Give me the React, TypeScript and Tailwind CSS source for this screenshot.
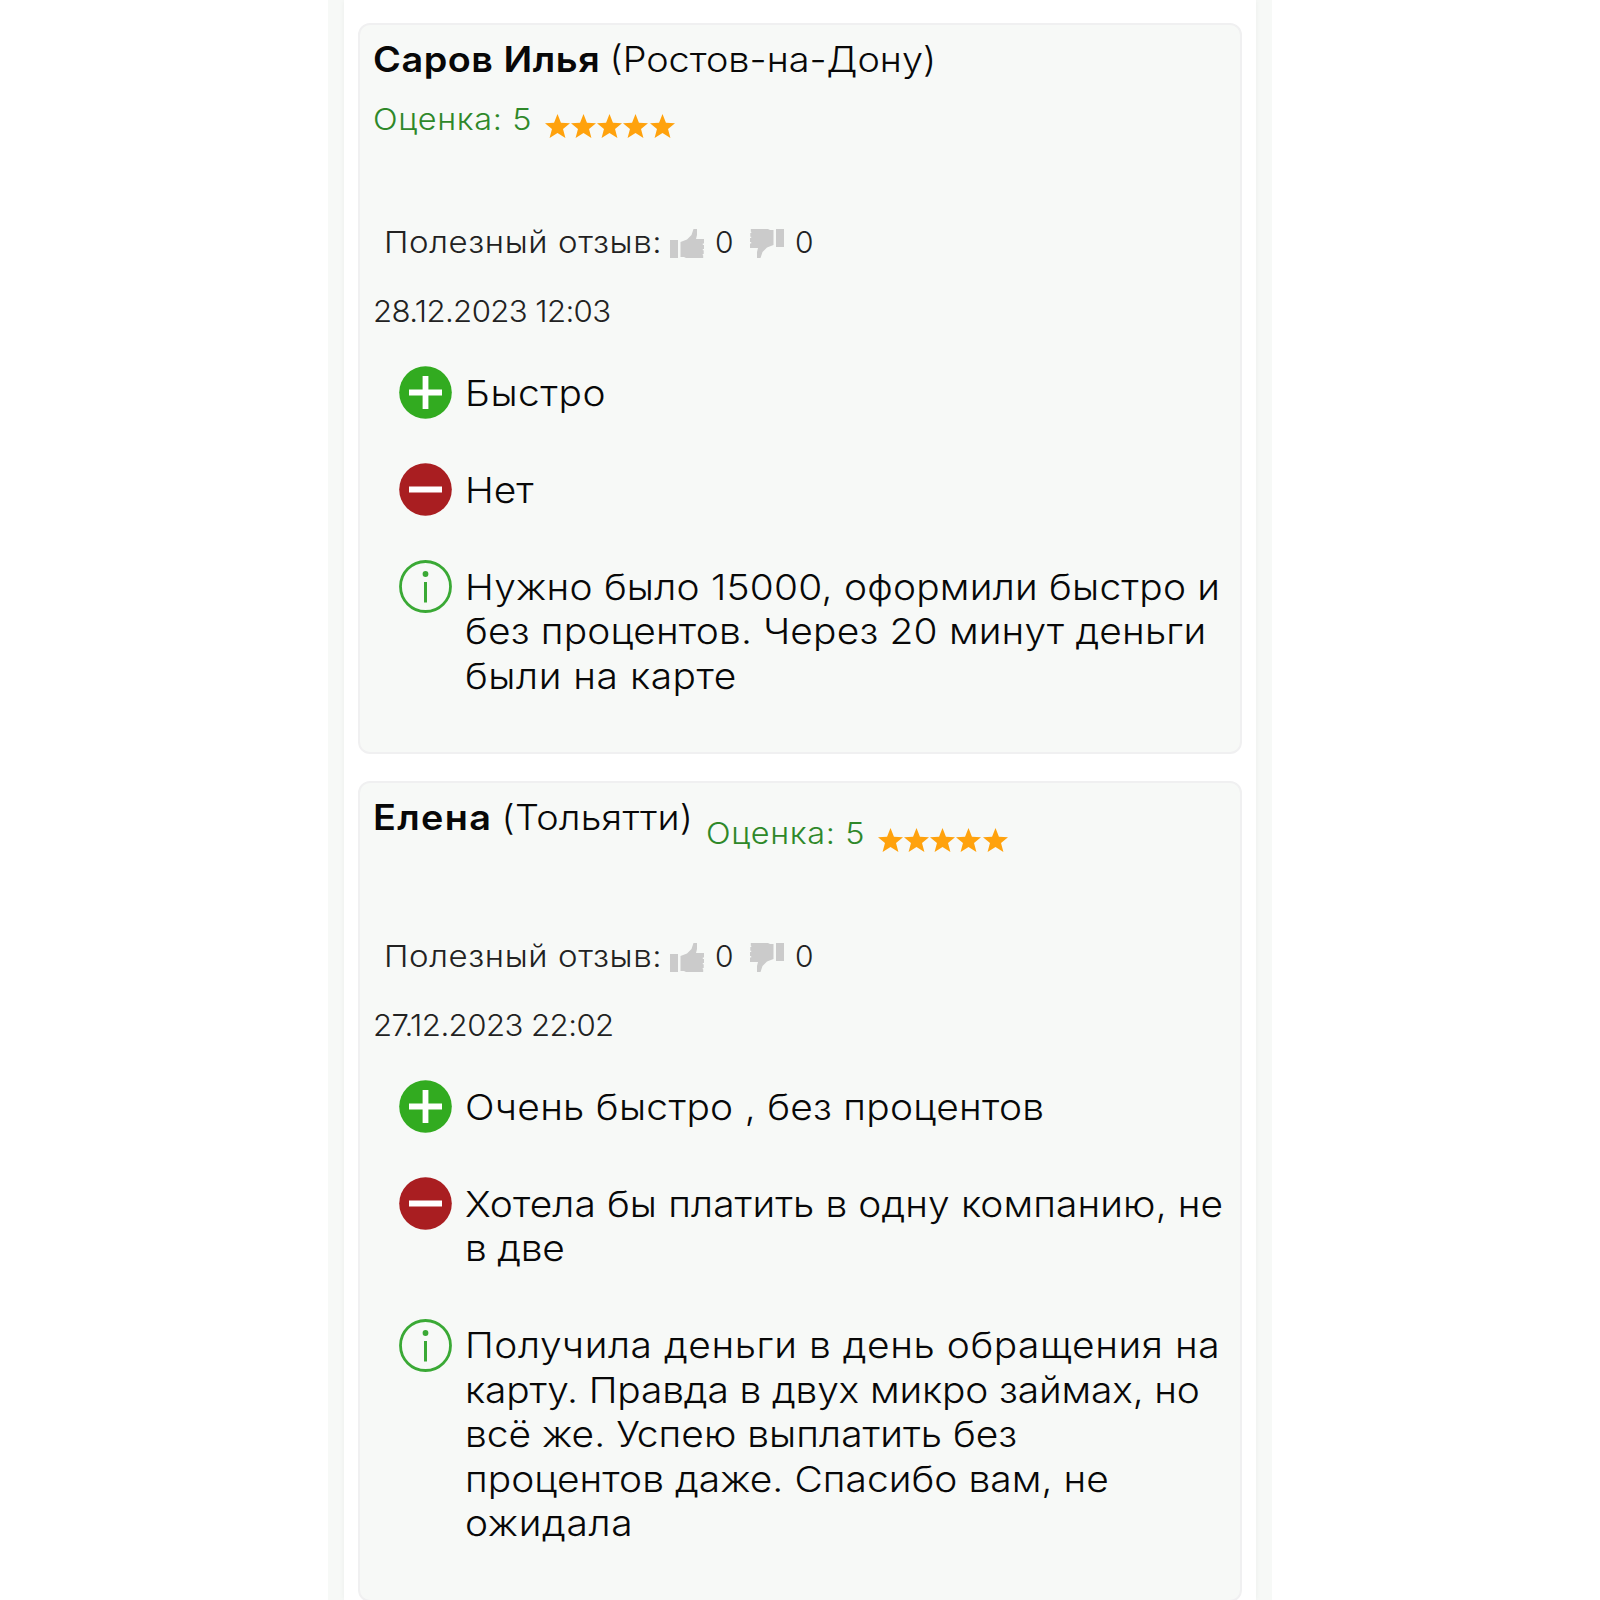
interface Line {
  text: string;
  tracking: string;
}

interface Note {
  kind: 'plus' | 'minus' | 'info';
  lines: Line[];
}

interface Review {
  name: Line;
  city: Line;
  rating: number;
  date: Line;
  stacked: boolean; // long names push the rating to its own row
  notes: Note[];
}

const reviews: Review[] = [
  {
    name: { text: 'Саров Илья', tracking: 'tracking-[0.5px]' },
    city: { text: '(Ростов-на-Дону)', tracking: 'tracking-[0px]' },
    rating: 5,
    date: { text: '28.12.2023 12:03', tracking: 'tracking-[-0.6px]' },
    stacked: true,
    notes: [
      { kind: 'plus', lines: [{ text: 'Быстро', tracking: 'tracking-[0.5px]' }] },
      { kind: 'minus', lines: [{ text: 'Нет', tracking: 'tracking-[0px]' }] },
      {
        kind: 'info',
        lines: [
          { text: 'Нужно было 15000, оформили быстро и', tracking: 'tracking-[0.21px]' },
          { text: 'без процентов. Через 20 минут деньги', tracking: 'tracking-[0.17px]' },
          { text: 'были на карте', tracking: 'tracking-[0.5px]' },
        ],
      },
    ],
  },
  {
    name: { text: 'Елена', tracking: 'tracking-[1.25px]' },
    city: { text: '(Тольятти)', tracking: 'tracking-[0.25px]' },
    rating: 5,
    date: { text: '27.12.2023 22:02', tracking: 'tracking-[-0.55px]' },
    stacked: false,
    notes: [
      { kind: 'plus', lines: [{ text: 'Очень быстро , без процентов', tracking: 'tracking-[0.27px]' }] },
      {
        kind: 'minus',
        lines: [
          { text: 'Хотела бы платить в одну компанию, не', tracking: 'tracking-[0.1px]' },
          { text: 'в две', tracking: 'tracking-[-0.25px]' },
        ],
      },
      {
        kind: 'info',
        lines: [
          { text: 'Получила деньги в день обращения на', tracking: 'tracking-[0.53px]' },
          { text: 'карту. Правда в двух микро займах, но', tracking: 'tracking-[-0.13px]' },
          { text: 'всё же. Успею выплатить без', tracking: 'tracking-[0.03px]' },
          { text: 'процентов даже. Спасибо вам, не', tracking: 'tracking-[0.06px]' },
          { text: 'ожидала', tracking: 'tracking-[0.6px]' },
        ],
      },
    ],
  },
];

function NoteIcon({ kind }: { kind: Note['kind'] }) {
  return (
    <svg viewBox="0 0 53 53" className="-my-[4.25px] h-[53px] w-[53px] shrink-0">
      {kind === 'info' ? (
        <>
          <circle cx="26.5" cy="26.5" r="25" fill="none" stroke="#3aa935" strokeWidth="2.8" />
          <circle cx="26.5" cy="14" r="2.9" fill="#3aa935" />
          <path d="M26.5 22v20.5" stroke="#3aa935" strokeWidth="3" />
        </>
      ) : (
        <>
          <circle cx="26.5" cy="26.5" r="26.3" fill={kind === 'plus' ? '#32ab20' : '#a91e21'} />
          <path d="M10 26.5h33" stroke="#fff" strokeWidth="5.8" />
          {kind === 'plus' && <path d="M26.5 10v33" stroke="#fff" strokeWidth="5.8" />}
        </>
      )}
    </svg>
  );
}

function Thumb({ down = false }: { down?: boolean }) {
  return (
    <svg viewBox="0 0 34 29" className={`mt-[3px] h-[29px] w-[34px] shrink-0 ${down ? 'rotate-180' : ''}`}>
      <path
        fill="#cbcbcb"
        d="M0 11h8v18H0zM10.500 13L17 10.500 21.500 6 23.500 0H27v6l-1 4h8v4.500h-1.200V16H34v4h-1.200v1.300h.900V25h-1v1.200h.500V29H16l-2-1h-3.500z"
      />
    </svg>
  );
}

function Rating({ value }: { value: number }) {
  return (
    <div className="flex items-start">
      <span className="w-[159px] origin-left scale-x-[1.08] text-[30px] leading-10 font-light tracking-[0.6px] text-[#2e8829]">
        Оценка: {value}
      </span>
      <div className="mt-[15px] ml-[12.5px] flex gap-[1.3px]">
        {Array.from({ length: value }, (_, i) => (
          <svg key={i} viewBox="0 0 24 23" className="h-6 w-[25px]">
            <path
              fill="#ffa20d"
              d="M12 0l3.300 8.300 8.700.5-6.700 5.500 2.300 8.700-7.600-4.800L4.400 23l2.300-8.700L0 8.800l8.700-.5z"
            />
          </svg>
        ))}
      </div>
    </div>
  );
}

function ReviewCard({ review }: { review: Review }) {
  return (
    <article className="rounded-xl border-2 border-[#f0f0f1] bg-[#f7f9f7] px-[13px] pb-[54px]">
      <header className={review.stacked ? 'h-[195px]' : 'flex h-[151px]'}>
        <h2
          className={`flex origin-left scale-x-[1.08] pt-[10px] text-[35px] leading-[48px] ${
            review.stacked ? 'w-fit' : 'w-[333px] h-fit'
          }`}
        >
          <span className={`mr-[8.5px] font-semibold whitespace-nowrap ${review.name.tracking}`}>{review.name.text}</span>
          <span className={`font-light whitespace-nowrap ${review.city.tracking}`}>{review.city.text}</span>
        </h2>
        <div className={review.stacked ? 'pt-4' : 'pt-[30px]'}>
          <Rating value={review.rating} />
        </div>
      </header>

      <div className="flex h-11 items-center pl-[11px] text-[30px] font-light text-[#222]">
        <span className="w-[286px]">
          <span className="inline-block origin-left scale-x-110 tracking-[0.55px]">Полезный отзыв:</span>
        </span>
        <Thumb />
        <span className="w-[46px] pl-[11px]">0</span>
        <Thumb down />
        <span className="pl-[11px]">0</span>
      </div>

      <p
        className={`w-fit origin-left scale-x-[1.04] pt-[28px] text-[30px] leading-[38px] font-light text-[#222] ${review.date.tracking}`}
      >
        {review.date.text}
      </p>

      <div className="flex flex-col gap-[52.5px] pt-[40.5px] pl-[26px]">
        {review.notes.map((note) => (
          <div key={note.kind} className="flex items-start gap-[13px]">
            <NoteIcon kind={note.kind} />
            <div className="origin-left scale-x-[1.08] text-[36px] leading-[44.5px] font-light">
              {note.lines.map((line) => (
                <p key={line.text} className={`whitespace-nowrap ${line.tracking}`}>
                  {line.text}
                </p>
              ))}
            </div>
          </div>
        ))}
      </div>
    </article>
  );
}

export default function App() {
  return (
    <div className="h-[1600px] overflow-hidden bg-white font-['Inter',sans-serif] text-[#080808]">
      <main className="mx-auto h-full w-[944px] overflow-hidden bg-[#f7f9f7] px-4">
        <div className="flex h-full flex-col gap-[27px] bg-white px-[14px] pt-[23px] shadow-[0_0_6px_rgba(0,0,0,0.05)]">
          {reviews.map((review) => (
            <ReviewCard key={review.date.text} review={review} />
          ))}
        </div>
      </main>
    </div>
  );
}
